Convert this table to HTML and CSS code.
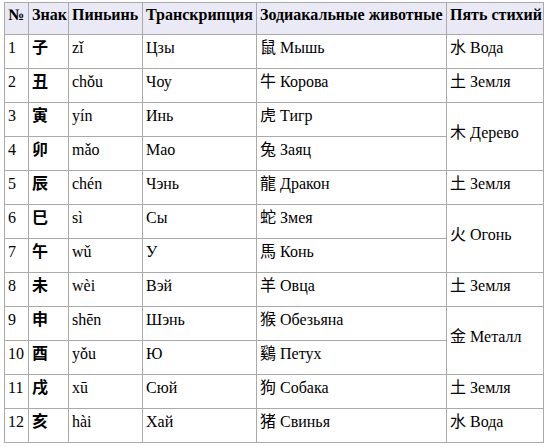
FILE: index.html
```html
<!DOCTYPE html>
<html lang="ru">
<head>
<meta charset="utf-8">
<title>Земные ветви</title>
<link rel="stylesheet" href="styles.css">
</head>
<body>
<table class="wikitable">
  <colgroup>
    <col class="c-num">
    <col class="c-sign">
    <col class="c-pinyin">
    <col class="c-trans">
    <col class="c-animal">
    <col class="c-elem">
  </colgroup>
  <thead>
    <tr>
      <th>№</th>
      <th>Знак</th>
      <th>Пиньинь</th>
      <th>Транскрипция</th>
      <th>Зодиакальные животные</th>
      <th>Пять стихий</th>
    </tr>
  </thead>
  <tbody>
    <tr>
      <td>1</td><td><span class="zh sign">子</span></td><td>zǐ</td><td>Цзы</td>
      <td><span class="zh">鼠</span> Мышь</td>
      <td><span class="zh">水</span> Вода</td>
    </tr>
    <tr>
      <td>2</td><td><span class="zh sign">丑</span></td><td>chǒu</td><td>Чоу</td>
      <td><span class="zh">牛</span> Корова</td>
      <td><span class="zh">土</span> Земля</td>
    </tr>
    <tr>
      <td>3</td><td><span class="zh sign">寅</span></td><td>yín</td><td>Инь</td>
      <td><span class="zh">虎</span> Тигр</td>
      <td rowspan="2"><span class="zh">木</span> Дерево</td>
    </tr>
    <tr>
      <td>4</td><td><span class="zh sign">卯</span></td><td>mǎo</td><td>Мао</td>
      <td><span class="zh">兔</span> Заяц</td>
    </tr>
    <tr>
      <td>5</td><td><span class="zh sign">辰</span></td><td>chén</td><td>Чэнь</td>
      <td><span class="zh">龍</span> Дракон</td>
      <td><span class="zh">土</span> Земля</td>
    </tr>
    <tr>
      <td>6</td><td><span class="zh sign">巳</span></td><td>sì</td><td>Сы</td>
      <td><span class="zh">蛇</span> Змея</td>
      <td rowspan="2"><span class="zh">火</span> Огонь</td>
    </tr>
    <tr>
      <td>7</td><td><span class="zh sign">午</span></td><td>wǔ</td><td>У</td>
      <td><span class="zh">馬</span> Конь</td>
    </tr>
    <tr>
      <td>8</td><td><span class="zh sign">未</span></td><td>wèi</td><td>Вэй</td>
      <td><span class="zh">羊</span> Овца</td>
      <td><span class="zh">土</span> Земля</td>
    </tr>
    <tr>
      <td>9</td><td><span class="zh sign">申</span></td><td>shēn</td><td>Шэнь</td>
      <td><span class="zh">猴</span> Обезьяна</td>
      <td rowspan="2"><span class="zh">金</span> Металл</td>
    </tr>
    <tr>
      <td>10</td><td><span class="zh sign">酉</span></td><td>yǒu</td><td>Ю</td>
      <td><span class="zh">鷄</span> Петух</td>
    </tr>
    <tr>
      <td>11</td><td><span class="zh sign">戌</span></td><td>xū</td><td>Сюй</td>
      <td><span class="zh">狗</span> Собака</td>
      <td><span class="zh">土</span> Земля</td>
    </tr>
    <tr>
      <td>12</td><td><span class="zh sign">亥</span></td><td>hài</td><td>Хай</td>
      <td><span class="zh">猪</span> Свинья</td>
      <td><span class="zh">水</span> Вода</td>
    </tr>
  </tbody>
</table>
</body>
</html>
```
FILE: styles.css
```css
html, body {
  background: #ffffff;
}

body {
  margin: 2px 0 0 4px;
  font-family: "Liberation Serif", "Noto Sans CJK SC", serif;
  font-size: 16px;
  color: #000000;
}

.wikitable {
  border-collapse: collapse;
  table-layout: fixed;
  width: 540px;
  border: 1px solid #aaaaaa;
  background: #ffffff;
}

.c-num { width: 24px; }
.c-sign { width: 40px; }
.c-pinyin { width: 74px; }
.c-trans { width: 114px; }
.c-animal { width: 190px; }
.c-elem { width: 97px; }

.wikitable th,
.wikitable td {
  border: 1px solid #aaaaaa;
  padding: 2px 3px 9px 3px;
  line-height: 20px;
  vertical-align: middle;
  text-align: left;
  white-space: nowrap;
}

.wikitable th {
  background: #eaeaf6;
  font-weight: bold;
  height: 20px;
  padding: 2px 2px 9px 3px;
}

.wikitable td {
  height: 22px;
}

.zh {
  font-family: "Noto Sans CJK SC", sans-serif;
  font-size: 16px;
  line-height: 16px;
}

.sign {
  font-weight: bold;
}
```
